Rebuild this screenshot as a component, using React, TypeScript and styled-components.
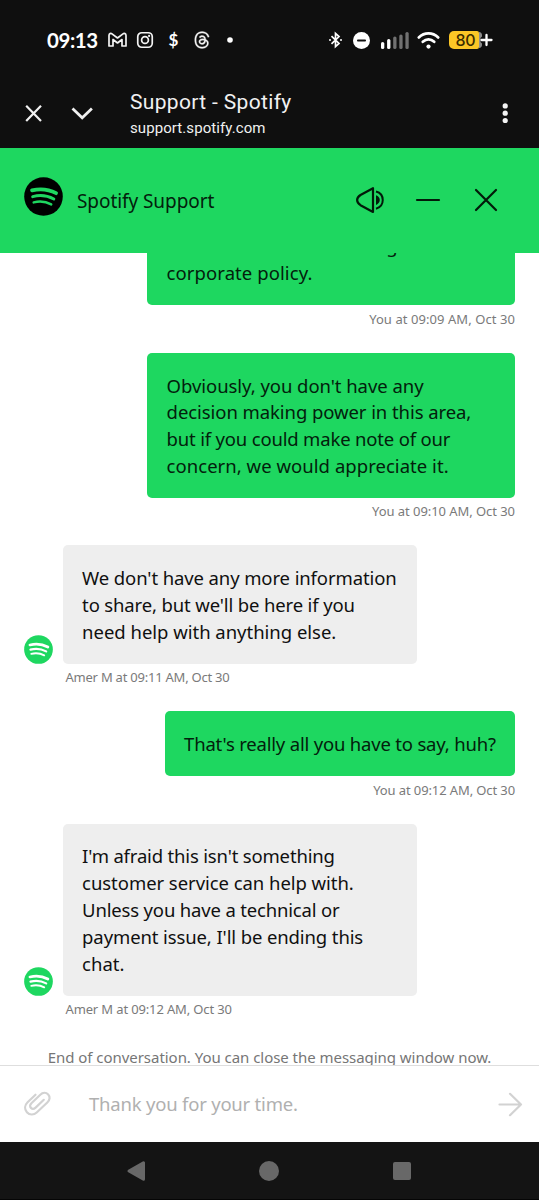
import React from "react";
import styled, { createGlobalStyle } from "styled-components";
import { FaThreads } from "react-icons/fa6";

const GlobalStyle = createGlobalStyle`
  * { box-sizing: border-box; }
  body { margin: 0; background: #fff; }
  svg { display: block; flex: none; overflow: visible; }
`;

const GREEN = "#1ed760";
const TEXT_FONT = `"Noto Sans", "Open Sans", sans-serif`;

const Screen = styled.div`
  width: 539px;
  height: 1200px;
  display: flex;
  flex-direction: column;
  overflow: hidden;
  background: #fff;
  font-family: ${TEXT_FONT};
`;

const StatusBar = styled.header`
  height: 80px;
  flex: none;
  display: flex;
  align-items: center;
  justify-content: space-between;
  padding: 0 47px 0 47px;
  background: #0f0f0f;
  color: #fff;
`;

const StatusGroup = styled.div`
  display: flex;
  align-items: center;
`;

const Clock = styled.span`
  width: 56px;
  font: 700 20.5px/24px Lato, sans-serif;
  letter-spacing: -0.4px;
`;

const StatusSlot = styled.span`
  width: 28.2px;
  display: flex;
  justify-content: center;
`;

const SystemIcons = styled.div`
  display: flex;
  align-items: center;
`;

const Gap = styled.span<{ $w: number }>`
  width: ${(p) => p.$w}px;
`;

const Dollar = styled.span`
  font: 700 17px/22px Lato, sans-serif;
`;

const Battery = styled.span`
  width: 30px;
  height: 18px;
  border-radius: 5px 2px 2px 5px;
  background: #fcc626;
  color: #3a2c00;
  font: 500 16px/19px Inter, sans-serif;
  text-align: center;
  letter-spacing: -0.3px;
  padding-left: 3px;
`;

const BrowserBar = styled.div`
  height: 68px;
  flex: none;
  display: flex;
  align-items: flex-start;
  padding: 0 29px 0 25px;
  background: #0f0f0f;
  color: #f1f1f1;
`;

const BarIcons = styled.div`
  width: 105px;
  padding-top: 24px;
  display: flex;
  gap: 28.5px;
`;

const PageInfo = styled.div`
  flex: 1;
  padding-top: 9px;
  font-family: Roboto, sans-serif;
`;

const PageTitle = styled.div`
  font-size: 21px;
  line-height: 26px;
  letter-spacing: 0.34px;
`;

const PageHost = styled.div`
  font-size: 15px;
  line-height: 27px;
  letter-spacing: 0.08px;
`;

const MoreIcon = styled.div`
  padding-top: 23px;
`;

const ChatHeader = styled.div`
  height: 105px;
  flex: none;
  display: flex;
  align-items: center;
  padding: 0 41px 0 24px;
  background: ${GREEN};
`;

const ChatLogo = styled.div`
  padding-bottom: 8px;
  margin-right: 14px;
`;

const ChatTitle = styled.h1`
  flex: 1;
  margin: 0;
  font-size: 19px;
  font-weight: 400;
  line-height: 26px;
  letter-spacing: -0.07px;
  color: #03200c;
`;

const ChatActions = styled.div`
  display: flex;
  align-items: center;
  gap: 31px;
  padding-bottom: 1px;
`;

const Messages = styled.main`
  height: 812px;
  flex: none;
  overflow: hidden;
  display: flex;
  flex-direction: column;
  justify-content: flex-end;
  padding: 0 24px;
`;

const MessageRow = styled.section<{ $own?: boolean }>`
  flex: none;
  display: flex;
  flex-direction: column;
  align-items: ${(p) => (p.$own ? "flex-end" : "flex-start")};
`;

const BubbleLine = styled.div`
  display: flex;
  align-items: flex-end;
  gap: 9.5px;
`;

const Bubble = styled.div<{ $own?: boolean; $width: number }>`
  width: ${(p) => p.$width}px;
  padding: 19.9px 18px 18.1px 19.6px;
  border-radius: 5px;
  background: ${(p) => (p.$own ? GREEN : "#eee")};
  color: ${(p) => (p.$own ? "#03200c" : "#101010")};
`;

const TextLine = styled.div<{ $track?: number }>`
  font-size: 18.5px;
  line-height: 26.85px;
  letter-spacing: ${(p) => p.$track ?? 0}px;
  white-space: nowrap;
`;

const Meta = styled.div<{ $own?: boolean; $track: number }>`
  height: 47.4px;
  padding-top: 3.4px;
  padding-left: ${(p) => (p.$own ? 0 : 41.5)}px;
  font-size: 13px;
  line-height: 20px;
  letter-spacing: ${(p) => p.$track}px;
  color: #7a7a7a;
  white-space: nowrap;
`;

const EndNote = styled.div`
  flex: none;
  height: 21.9px;
  font-size: 15px;
  line-height: 29px;
  letter-spacing: -0.04px;
  text-align: center;
  white-space: nowrap;
  color: #767676;
`;

const Composer = styled.div`
  height: 77px;
  flex: none;
  display: flex;
  align-items: center;
  padding: 0 17px 1px 24px;
  border-top: 1px solid #dedede;
`;

const Draft = styled.div`
  flex: 1;
  margin-left: 38px;
  font-size: 18.5px;
  line-height: 26px;
  letter-spacing: -0.21px;
  color: #b0b0b0;
`;

const NavBar = styled.nav`
  height: 58px;
  flex: none;
  display: flex;
  align-items: center;
  justify-content: center;
  gap: 114px;
  padding-right: 1.5px;
  background: #141414;
  border-bottom: 1px solid #050505;
`;

function SpotifyMark({ size, disc, wave }: { size: number; disc: string; wave: string }) {
  return (
    <svg width={size} height={size} viewBox="0 0 39 39" fill="none" stroke={wave} strokeLinecap="round">
      <circle cx="19.5" cy="19.5" r="19.3" fill={disc} stroke="none" />
      <path d="M8 13.4C16 11.4 25 12.4 32.1 16.2" strokeWidth="3.7" />
      <path d="M8.7 19.6C16 17.8 23.5 18.6 29.8 22" strokeWidth="3" />
      <path d="M9.7 25.4C16 23.9 22 24.6 27.200 27.4" strokeWidth="2.5" />
    </svg>
  );
}

interface Message {
  own?: boolean;
  width: number;
  lines: [string, number][];
  meta: string;
  metaTrack: number;
}

const messages: Message[] = [
  {
    own: true,
    width: 368,
    lines: [
      ["announcement of a change in", 0.12],
      ["corporate policy.", 0.08],
    ],
    meta: "You at 09:09 AM, Oct 30",
    metaTrack: 0.07,
  },
  {
    own: true,
    width: 368,
    lines: [
      ["Obviously, you don't have any", -0.05],
      ["decision making power in this area,", -0.07],
      ["but if you could make note of our", -0.18],
      ["concern, we would appreciate it.", 0.04],
    ],
    meta: "You at 09:10 AM, Oct 30",
    metaTrack: -0.06,
  },
  {
    width: 354,
    lines: [
      ["We don't have any more information", -0.11],
      ["to share, but we'll be here if you", -0.14],
      ["need help with anything else.", -0.02],
    ],
    meta: "Amer M at 09:11 AM, Oct 30",
    metaTrack: -0.23,
  },
  {
    own: true,
    width: 350.5,
    lines: [["That's really all you have to say, huh?", -0.19]],
    meta: "You at 09:12 AM, Oct 30",
    metaTrack: -0.11,
  },
  {
    width: 354,
    lines: [
      ["I'm afraid this isn't something", -0.17],
      ["customer service can help with.", -0.05],
      ["Unless you have a technical or", -0.17],
      ["payment issue, I'll be ending this", -0.11],
      ["chat.", 0],
    ],
    meta: "Amer M at 09:12 AM, Oct 30",
    metaTrack: -0.14,
  },
];

export default function App() {
  return (
    <Screen>
      <GlobalStyle />
      <StatusBar>
        <StatusGroup>
          <Clock>09:13</Clock>
          <StatusSlot>
            <svg width="19" height="14" viewBox="0 0 19 14" fill="none" stroke="#f4f4f4" strokeWidth="1.7" strokeLinejoin="round">
              <path d="M1 2.4C1 .6 2.8 0 4 .9L9.5 5 15 .9C16.200 0 18 .6 18 2.400V13H14V6.500L9.500 10 5 6.500V13H1Z" />
            </svg>
          </StatusSlot>
          <StatusSlot>
            <svg width="16" height="16" viewBox="0 0 16 16" fill="none" stroke="#f4f4f4" strokeWidth="1.7">
              <rect x=".75" y=".75" width="14.5" height="14.5" rx="4" />
              <circle cx="8" cy="8" r="3.400" />
              <circle cx="12.100" cy="3.900" r="1.100" fill="#f4f4f4" stroke="none" />
            </svg>
          </StatusSlot>
          <StatusSlot>
            <Dollar>$</Dollar>
          </StatusSlot>
          <StatusSlot>
            <FaThreads size={18} color="#f4f4f4" stroke="#f4f4f4" strokeWidth={8} />
          </StatusSlot>
          <StatusSlot>
            <svg width="6" height="6" viewBox="0 0 6 6">
              <circle cx="3" cy="3" r="2.800" fill="#fff" />
            </svg>
          </StatusSlot>
        </StatusGroup>
        <SystemIcons>
          <svg width="13" height="16" viewBox="0 0 13 16" fill="none" stroke="#fff" strokeWidth="1.700">
            <path d="M2.500 4.200L10 11.400 6.500 14.600V1.400L10 4.600 2.500 11.800" />
            <circle cx="1" cy="8" r="1" fill="#fff" stroke="none" />
            <circle cx="12" cy="8" r="1" fill="#fff" stroke="none" />
          </svg>
          <Gap $w={11} />
          <svg width="17" height="17" viewBox="0 0 17 17">
            <circle cx="8.500" cy="8.500" r="8.500" fill="#fff" />
            <rect x="4" y="7.600" width="9" height="1.900" rx=".9" fill="#0f0f0f" />
          </svg>
          <Gap $w={11} />
          <svg width="28" height="17" viewBox="0 0 28 17">
            <rect x="0" y="10" width="3.300" height="7" rx="1.600" fill="#fff" />
            <rect x="6.100" y="7" width="3.300" height="10" rx="1.600" fill="#fff" />
            <rect x="12.200" y="4.500" width="3.300" height="12.500" rx="1.600" fill="#717171" />
            <rect x="18.300" y="2.500" width="3.300" height="14.500" rx="1.600" fill="#717171" />
            <rect x="24.400" y="0" width="3.300" height="17" rx="1.600" fill="#717171" />
          </svg>
          <Gap $w={8} />
          <svg width="23" height="17" viewBox="0 0 23 17" fill="none" stroke="#fff" strokeWidth="2.800" strokeLinecap="round">
            <path d="M1.800 5.400C7.400.1 15.600.1 21.200 5.400" />
            <path d="M5.800 9.700C9.200 6.700 13.800 6.700 17.200 9.700" />
            <circle cx="11.500" cy="14.600" r="2.100" fill="#fff" stroke="none" />
          </svg>
          <Gap $w={9} />
          <Battery>80</Battery>
          <svg width="13" height="18" viewBox="0 0 13 18" fill="none">
            <path d="M0 1C2 1 3 2.500 3 4V5.500L1.500 7V11L3 12.500V14C3 15.500 2 17 0 17Z" fill="#8c8c8c" />
            <path d="M7.500 4V14M2.500 9H12.500" stroke="#fff" strokeWidth="2.300" strokeLinecap="round" />
          </svg>
        </SystemIcons>
      </StatusBar>

      <BrowserBar>
        <BarIcons>
          <svg width="18" height="18" viewBox="0 0 18 18" stroke="#f1f1f1" strokeWidth="2.200">
            <path d="M1.200 1.700L16 17M16 1.700L1.200 17" />
          </svg>
          <svg width="21" height="18" viewBox="0 0 21 18" fill="none" stroke="#f1f1f1" strokeWidth="2.700">
            <path d="M.500 4.500L10.200 13.800 19.900 4.500" />
          </svg>
        </BarIcons>
        <PageInfo>
          <PageTitle>Support - Spotify</PageTitle>
          <PageHost>support.spotify.com</PageHost>
        </PageInfo>
        <MoreIcon>
          <svg width="10" height="20" viewBox="0 0 10 20" fill="#f4f4f4">
            <circle cx="5.200" cy="2.900" r="2.600" />
            <circle cx="5.200" cy="10.200" r="2.600" />
            <circle cx="5.200" cy="17.500" r="2.600" />
          </svg>
        </MoreIcon>
      </BrowserBar>

      <ChatHeader>
        <ChatLogo>
          <SpotifyMark size={39} disc="#000" wave={GREEN} />
        </ChatLogo>
        <ChatTitle>Spotify Support</ChatTitle>
        <ChatActions>
          <svg width="29" height="28" viewBox="0 0 29 28" fill="none" stroke="#021a09" strokeWidth="2.200" strokeLinejoin="round">
            <path d="M18 2.200V26L5.500 19.200C1 16.200 1 12 5.500 9Z" />
            <path d="M21 5.500C30 7.800 30 20.400 21 22.700" strokeWidth="2" />
            <path d="M21 9.300C26 11 26 17.200 21 18.900Z" fill="#021a09" stroke="none" />
          </svg>
          <svg width="26" height="24" viewBox="0 0 26 24" stroke="#021a09" strokeWidth="2.200" strokeLinecap="round">
            <path d="M2 12H24" />
          </svg>
          <svg width="26" height="24" viewBox="0 0 26 24" stroke="#021a09" strokeWidth="2.200" strokeLinecap="round">
            <path d="M4 2L24 22M24 2L4 22" />
          </svg>
        </ChatActions>
      </ChatHeader>

      <Messages>
        {messages.map((m, i) => (
          <MessageRow key={i} $own={m.own}>
            <BubbleLine>
              {!m.own && <SpotifyMark size={29} disc={GREEN} wave="#fff" />}
              <Bubble $own={m.own} $width={m.width}>
                {m.lines.map(([text, track]) => (
                  <TextLine key={text} $track={track}>
                    {text}
                  </TextLine>
                ))}
              </Bubble>
            </BubbleLine>
            <Meta $own={m.own} $track={m.metaTrack}>
              {m.meta}
            </Meta>
          </MessageRow>
        ))}
        <EndNote>End of conversation. You can close the messaging window now.</EndNote>
      </Messages>

      <Composer>
        <svg width="27" height="24" viewBox="0 0 27 24" fill="none" stroke="#d2d2d2" strokeWidth="2.200" strokeLinecap="round" strokeLinejoin="round">
          <path d="M11.500 2.700L3.600 10.200C.4 13.300.4 17.400 2.900 20.200C5.600 23.200 9.800 23.200 12.700 20.500L23.300 10.500C26 8 26.300 4.700 24.200 2.500C22 .3 18.700.5 16.300 2.700L7.400 11.200C5.800 12.800 5.700 14.700 6.900 15.900C8.200 17.200 10.100 17 11.600 15.600L19.800 7.800" />
        </svg>
        <Draft>Thank you for your time.</Draft>
        <svg width="24" height="24" viewBox="0 0 24 24" fill="none" stroke="#d2d2d2" strokeWidth="2.200" strokeLinecap="round" strokeLinejoin="round">
          <path d="M1.500 12.500H23M12 1.800L23 12.500 12 23.200" />
        </svg>
      </Composer>

      <NavBar>
        <svg width="18" height="20" viewBox="0 0 18 20">
          <path d="M2 10L16.500 1.800V18.200Z" fill="#686868" stroke="#686868" strokeWidth="3" strokeLinejoin="round" />
        </svg>
        <svg width="20" height="20" viewBox="0 0 20 20">
          <circle cx="10" cy="10" r="10" fill="#686868" />
        </svg>
        <svg width="18" height="20" viewBox="0 0 18 20">
          <rect x="0" y="1" width="18" height="18" rx="2" fill="#686868" />
        </svg>
      </NavBar>
    </Screen>
  );
}
